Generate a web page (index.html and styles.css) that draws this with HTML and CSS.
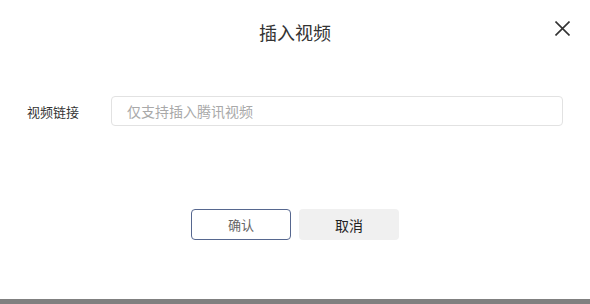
FILE: index.html
```html
<!DOCTYPE html>
<html lang="zh-CN">
<head>
    <meta charset="UTF-8">
    <meta name="viewport" content="width=device-width, initial-scale=1.0">
    <title>插入视频</title>
    <link rel="stylesheet" href="styles.css">
</head>
<body>
    <div class="dialog">
        <div class="dialog-header">
            <h2 class="dialog-title">插入视频</h2>
            <button class="dialog-close" aria-label="关闭">
                <svg width="15" height="15" viewBox="0 0 15 15">
                    <path d="M0.5 0.5 L14.5 14.5 M14.5 0.5 L0.5 14.5" stroke="#333" stroke-width="1.6" fill="none"/>
                </svg>
            </button>
        </div>

        <div class="dialog-body">
            <div class="form-row">
                <label class="form-label" for="videoUrl">视频链接</label>
                <input class="form-input" id="videoUrl" type="text" placeholder="仅支持插入腾讯视频">
            </div>
        </div>

        <div class="dialog-footer">
            <button class="btn btn-primary">确认</button>
            <button class="btn btn-default">取消</button>
        </div>
    </div>
    <div class="bottom-bar"></div>
</body>
</html>
```

FILE: styles.css
```css
body {
    margin: 0;
    height: 304px;
    display: flex;
    flex-direction: column;
    background-color: #fff;
    font-family: "Noto Sans CJK SC", "Noto Sans", sans-serif;
    overflow: hidden;
}

.dialog {
    flex: 1;
    display: flex;
    flex-direction: column;
}

.dialog-header {
    position: relative;
    height: 64px;
    display: flex;
    justify-content: center;
    align-items: center;
}

.dialog-title {
    margin: 0;
    font-size: 18px;
    font-weight: normal;
    color: #333;
}

.dialog-close {
    position: absolute;
    top: 21px;
    right: 20px;
    width: 15px;
    height: 15px;
    padding: 0;
    border: none;
    background: none;
    display: flex;
    cursor: pointer;
}

.dialog-body {
    padding: 32px 27px 0 27px;
}

.form-row {
    display: flex;
    align-items: center;
}

.form-label {
    width: 84px;
    font-size: 13px;
    color: #333;
}

.form-input {
    width: 452px;
    height: 30px;
    box-sizing: border-box;
    padding: 0 15px;
    border: 1px solid #e2e2e2;
    border-radius: 4px;
    font-family: inherit;
    font-size: 14px;
    color: #333;
    outline: none;
}

.form-input::placeholder {
    color: #a9a9a9;
}

.dialog-footer {
    margin-top: 83px;
    display: flex;
    justify-content: center;
    gap: 8px;
}

.btn {
    width: 100px;
    height: 31px;
    box-sizing: border-box;
    border-radius: 4px;
    font-family: inherit;
    font-size: 13px;
    cursor: pointer;
}

.btn-primary {
    border: 1px solid #56678f;
    background-color: #fff;
    color: #666;
}

.btn-default {
    border: none;
    background-color: #f0f0f0;
    color: #222;
    font-size: 14px;
}

.bottom-bar {
    height: 5px;
    background-color: #808080;
}
```
